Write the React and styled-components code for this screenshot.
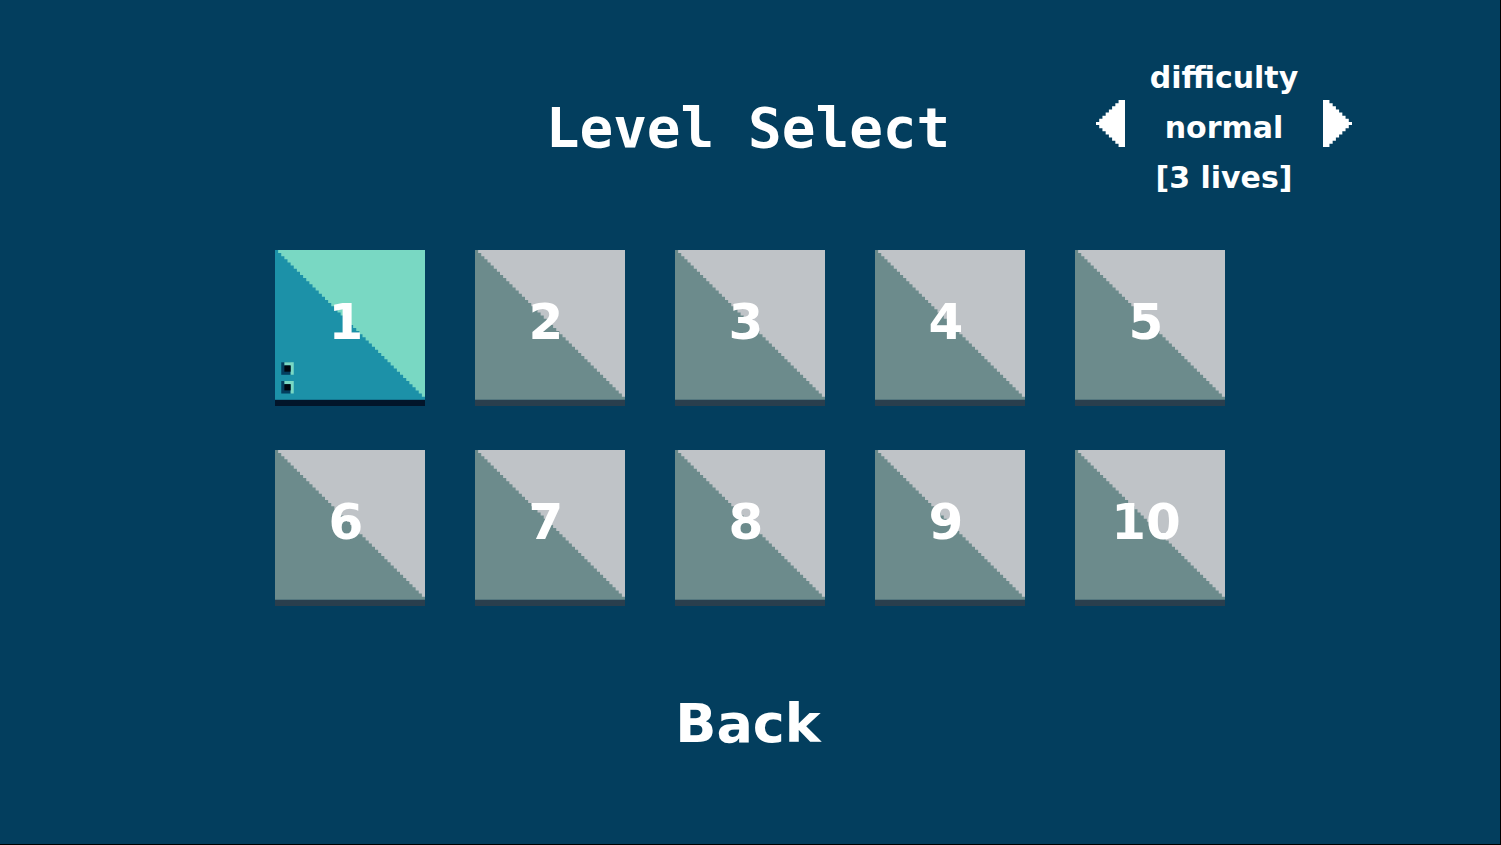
import React, { useState } from 'react';
import styled, { createGlobalStyle } from 'styled-components';

const GlobalStyle = createGlobalStyle`
  body {
    margin: 0;
    background-color: #033e5e;
  }

  * {
    box-sizing: border-box;
  }
`;

const StyledScreen = styled.main`
  min-height: 100vh;
  padding: 64px 144px;
  border-right: 1px solid #000;
  border-bottom: 1px solid #000;
  background-color: #033e5e;
  color: #fff;
  font-family: 'DejaVu Sans', sans-serif;
  font-weight: bold;
`;

const StyledHeader = styled.header`
  display: grid;
  grid-template-columns: 1fr auto 1fr;
  align-items: center;
  margin-bottom: 58px;
`;

const StyledTitle = styled.h1`
  grid-column: 2;
  margin: 0;
  padding-right: 4px;
  font-family: 'DejaVu Sans Mono', monospace;
  font-size: 56px;
  line-height: 64px;
  white-space: nowrap;
`;

const StyledDifficulty = styled.section`
  display: flex;
  align-items: center;
  justify-content: space-between;
  justify-self: end;
  width: 260px;
  height: 128px;
  padding-right: 4px;
`;

const StyledDifficultyText = styled.div`
  display: flex;
  flex-direction: column;
  align-items: center;
  gap: 18px;
`;

const StyledLabel = styled.p`
  margin: 0;
  font-size: 30px;
  line-height: 32px;
  white-space: nowrap;
`;

const StyledButton = styled.button`
  display: block;
  padding: 0;
  border: 0;
  background: none;
  color: inherit;
  font: inherit;
  cursor: pointer;
`;

const StyledArrow = styled(StyledButton)`
  padding-bottom: 10px;

  svg {
    display: block;
    width: 29px;
    height: 47px;
  }
`;

const StyledLevels = styled.div`
  display: grid;
  grid-template-columns: repeat(5, 150px);
  justify-content: center;
  gap: 44px 50px;
`;

const StyledTile = styled(StyledButton)`
  display: grid;
  place-items: center;
  font-size: 50px;
  line-height: 56px;

  > * {
    grid-area: 1 / 1;
  }

  svg {
    display: block;
    width: 150px;
    height: 156px;
  }
`;

const StyledNumber = styled.span`
  padding: 0 8px 12px 0;
`;

const StyledBack = styled(StyledButton)`
  margin: 86px auto 0;
  padding-right: 4px;
  font-size: 54px;
  line-height: 64px;
`;

const DIFFICULTIES = [
  { name: 'easy', lives: 5 },
  { name: 'normal', lives: 3 },
  { name: 'hard', lives: 1 },
];

const LEVELS = [1, 2, 3, 4, 5, 6, 7, 8, 9, 10];

const OPEN = { light: '#79d8c3', dark: '#1c91a8', base: '#02152a' };
const LOCKED = { light: '#bfc3c7', dark: '#6c8b8c', base: '#293e4d' };

// one step down for each step across
let stairs = 'M1 0';
for (let i = 1; i < 48; i += 1) {
  stairs += `V${i}H${i + 1}`;
}
stairs += 'H48V0Z';

const Eye = ({ y }) => (
  <g>
    <path fill="#033e5e" d={`M2 ${y}h3v4h-3z`} />
    <path fill="#79d8c3" d={`M3 ${y}h3v4h-1v-3h-2z`} />
    <path fill="#000810" d={`M3 ${y + 1}h2v2h-2z`} />
  </g>
);

const TileArt = ({ open }) => {
  const colors = open ? OPEN : LOCKED;
  return (
    <svg viewBox="0 0 48 50" preserveAspectRatio="none" aria-hidden="true">
      <path fill={colors.base} d="M0 48h48v2H0z" />
      <path fill={colors.dark} d="M0 0h48v48H0z" />
      <path fill={colors.light} d={stairs} />
      {open && <Eye y={36} />}
      {open && <Eye y={42} />}
    </svg>
  );
};

const Arrow = ({ flip }) => (
  <svg viewBox="0 0 9 15" preserveAspectRatio="none" aria-hidden="true">
    <path
      fill="#fff"
      transform={flip ? 'translate(9 0) scale(-1 1)' : undefined}
      d="M9 0H7V1H6V2H5V3H4V4H3V5H2V6H1V7H0V8H1V9H2V10H3V11H4V12H5V13H6V14H7V15H9Z"
    />
  </svg>
);

const App = () => {
  const [difficulty, setDifficulty] = useState(1);
  const { name, lives } = DIFFICULTIES[difficulty];

  const change = (step) => {
    setDifficulty((difficulty + step + DIFFICULTIES.length) % DIFFICULTIES.length);
  };

  return (
    <StyledScreen>
      <GlobalStyle />
      <StyledHeader>
        <StyledTitle>Level Select</StyledTitle>
        <StyledDifficulty>
          <StyledArrow type="button" aria-label="Previous difficulty" onClick={() => change(-1)}>
            <Arrow />
          </StyledArrow>
          <StyledDifficultyText>
            <StyledLabel>difficulty</StyledLabel>
            <StyledLabel>{name}</StyledLabel>
            <StyledLabel>[{lives} lives]</StyledLabel>
          </StyledDifficultyText>
          <StyledArrow type="button" aria-label="Next difficulty" onClick={() => change(1)}>
            <Arrow flip />
          </StyledArrow>
        </StyledDifficulty>
      </StyledHeader>
      <StyledLevels>
        {LEVELS.map((level) => (
          <StyledTile key={level} type="button">
            <TileArt open={level === 1} />
            <StyledNumber>{level}</StyledNumber>
          </StyledTile>
        ))}
      </StyledLevels>
      <StyledBack type="button">Back</StyledBack>
    </StyledScreen>
  );
};

export default App;
